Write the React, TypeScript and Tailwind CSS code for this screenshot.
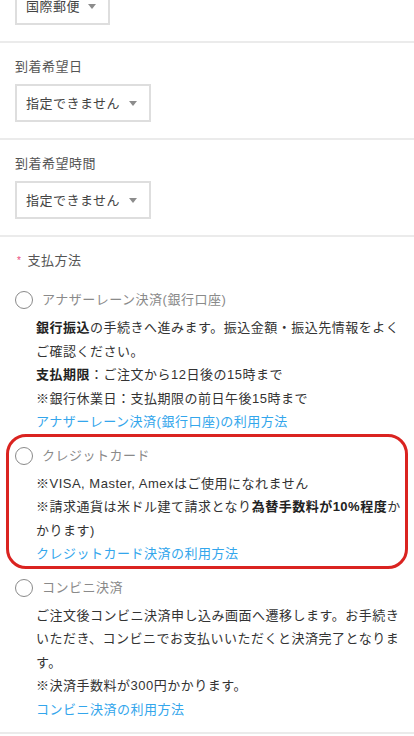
import { ReactNode } from 'react';

function Caret() {
  return (
    <svg width="8" height="5" viewBox="0 0 8 5" className="shrink-0">
      <polygon points="0,0 8,0 4,5" fill="#8c8c8c" />
    </svg>
  );
}

function SelectBox({ value, className = '' }: { value: string; className?: string }) {
  return (
    <div
      className={`flex h-[38px] items-center justify-between border-2 border-[#dedede] bg-white pl-[9px] pr-[12px] ${className}`}
    >
      <span className="text-[13px] leading-none tracking-[0.5px] text-[#444]">{value}</span>
      <Caret />
    </div>
  );
}

function Divider() {
  return <div className="h-[2px] w-full bg-[#ebebeb]" />;
}

interface PaymentOptionProps {
  label: string;
  highlight?: boolean;
  children: ReactNode;
}

function PaymentOption({ label, highlight, children }: PaymentOptionProps) {
  return (
    <div className="relative">
      {highlight && (
        <div className="pointer-events-none absolute -top-[11px] -right-[4px] -bottom-[3px] -left-[9px] rounded-[20px] border-[3px] border-[#da2320]" />
      )}
      <div className="flex h-[22px] items-center gap-[9px]">
        <span className="block h-[18px] w-[18px] shrink-0 rounded-full border-[1.5px] border-[#8a8a8a] bg-white" />
        <span className="text-[13px] tracking-[0.5px] text-[#8a8a8a]">{label}</span>
      </div>
      <div className="mt-[5px] pl-[21px] text-[13px] leading-[23.5px] tracking-[0.5px] text-[#333]">
        {children}
      </div>
    </div>
  );
}

function UsageLink({ children }: { children: ReactNode }) {
  return <p className="text-[#33a6ec]">{children}</p>;
}

export default function App() {
  return (
    <div className="min-h-screen overflow-hidden bg-white font-['Liberation_Sans','Noto_Sans_CJK_JP',sans-serif]">
      {/* shipping method (cut off at top) */}
      <section className="px-[15px] pb-[16px]">
        <SelectBox value="国際郵便" className="-mt-[13px] w-[95px]" />
      </section>
      <Divider />

      <section className="px-[15px] pt-[14px] pb-[16px]">
        <p className="text-[13px] leading-[20px] tracking-[0.5px] text-[#555]">到着希望日</p>
        <SelectBox value="指定できません" className="mt-[7px] w-[136px]" />
      </section>
      <Divider />

      <section className="px-[15px] pt-[14px] pb-[16px]">
        <p className="text-[13px] leading-[20px] tracking-[0.5px] text-[#555]">到着希望時間</p>
        <SelectBox value="指定できません" className="mt-[7px] w-[136px]" />
      </section>
      <Divider />

      <section className="pt-[14px] pr-[10px] pb-[11px] pl-[15px]">
        <p className="flex items-center text-[13px] leading-[20px] tracking-[0.5px] text-[#555]">
          <span className="mr-[6px] ml-[2px] text-[10px] text-[#ea4b7d]">*</span>
          支払方法
        </p>

        <div className="mt-[18px] flex flex-col gap-[11px]">
          <PaymentOption label="アナザーレーン決済(銀行口座)">
            <p>
              <span className="font-bold text-[#222]">銀行振込</span>
              の手続きへ進みます。振込金額・振込先情報をよくご確認ください。
            </p>
            <p>
              <span className="font-bold text-[#222]">支払期限</span>：ご注文から12日後の15時まで
            </p>
            <p>※銀行休業日：支払期限の前日午後15時まで</p>
            <UsageLink>アナザーレーン決済(銀行口座)の利用方法</UsageLink>
          </PaymentOption>

          <PaymentOption label="クレジットカード" highlight>
            <p>※VISA, Master, Amexはご使用になれません</p>
            <p>
              ※請求通貨は米ドル建て請求となり
              <span className="font-bold text-[#222]">為替手数料が10%程度</span>
              かかります)
            </p>
            <UsageLink>クレジットカード決済の利用方法</UsageLink>
          </PaymentOption>

          <PaymentOption label="コンビニ決済">
            <p>ご注文後コンビニ決済申し込み画面へ遷移します。お手続きいただき、コンビニでお支払いいただくと決済完了となります。</p>
            <p>※決済手数料が300円かかります。</p>
            <UsageLink>コンビニ決済の利用方法</UsageLink>
          </PaymentOption>
        </div>
      </section>
      <Divider />
    </div>
  );
}
